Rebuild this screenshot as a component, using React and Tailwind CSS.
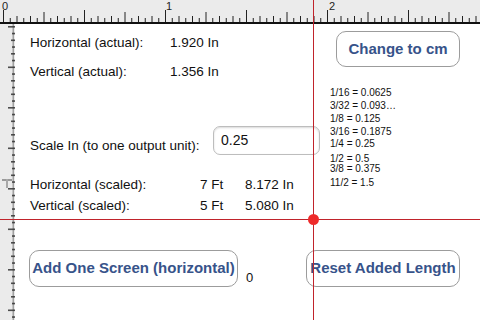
import React from "react";

const STEP = 6.75;

function TopRuler() {
  const ticks = [];
  for (let i = 0; i < 72; i++) {
    const x = 3.5 + i * STEP;
    let h = i % 2 === 0 ? 6 : 4;
    if (i % 6 === 0) h = 10;
    if (i % 12 === 0) h = 12;
    if (i % 24 === 0) h = 12;
    ticks.push(<line key={i} x1={x} x2={x} y1={22 - h} y2={22} stroke="#222" strokeWidth="1" />);
  }
  return (
    <div className="h-[24px] w-full bg-[#ebebeb]">
      <svg width="480" height="24" className="block">
        {ticks}
        <rect x="0" y="22" width="480" height="2" fill="#111" />
        <text x="2" y="10" fontSize="11" fill="#222" fontFamily="Liberation Sans, sans-serif">0</text>
        <text x="166" y="10" fontSize="11" fill="#222" fontFamily="Liberation Sans, sans-serif">1</text>
        <text x="329" y="10" fontSize="11" fill="#222" fontFamily="Liberation Sans, sans-serif">2</text>
      </svg>
    </div>
  );
}

function SideRuler() {
  const ticks = [];
  for (let i = 0; i < 45; i++) {
    const y = 2 + i * STEP;
    let w = i % 2 === 0 ? 4 : 3;
    if (i % 6 === 0) w = 7;
    ticks.push(<rect key={i} x={15 - w} y={y} width={w} height="1.6" fill="#333" opacity="0.85" />);
  }
  return (
    <div className="w-[15px] h-full bg-[#ebebeb] shrink-0">
      <svg width="15" height="296" className="block">
        <rect x="12.5" y="0" width="1.5" height="296" fill="#555" opacity="0.5" />
        {ticks}
        <rect x="2" y="155" width="10" height="2" fill="#9a9a9a" />
        <rect x="6" y="155" width="2" height="9" fill="#a8a8a8" />
      </svg>
    </div>
  );
}

function Row({ label, labelW, children, className }) {
  return (
    <div className={"flex text-[13.5px] leading-[16px] " + (className || "")}>
      <span className={"shrink-0 " + labelW}>{label}</span>
      {children}
    </div>
  );
}

const fractions = [
  ["1/16 = 0.0625", ""],
  ["3/32 = 0.093\u2026", ""],
  ["1/8 = 0.125", ""],
  ["3/16 = 0.1875", ""],
  ["1/4 = 0.25", "-mt-[1px]"],
  ["1/2 = 0.5", "mt-[2px]"],
  ["3/8 = 0.375", "-mt-[3px]"],
  ["11/2 = 1.5", "mt-[1px]"],
];

export default function App() {
  return (
    <div className="relative w-[480px] h-[320px] overflow-hidden bg-white text-[#111] font-['Liberation_Sans',Arial,sans-serif]">
      <TopRuler />

      <div className="flex h-[296px]">
        <SideRuler />

        <div className="flex-1 flex flex-col">
          {/* top part */}
          <div className="flex h-[190px]">
            <div className="w-[298px] shrink-0 pl-[15px] pt-[11px]">
              <Row label="Horizontal (actual):" labelW="w-[140px]">
                <span>1.920 In</span>
              </Row>
              <Row label="Vertical (actual):" labelW="w-[140px]" className="mt-[13px]">
                <span>1.356 In</span>
              </Row>

              <div className="flex items-end mt-[46px]">
                <span className="w-[183px] shrink-0 text-[13.5px] leading-[16px] mb-[1px]">
                  Scale In (to one output unit):
                </span>
                <div className="w-[107px] shrink-0 h-[29px] rounded-[7px] border border-[#bdbdbd] shadow-[inset_0_1px_2px_rgba(0,0,0,0.15)] pl-[7px] flex items-center text-[14px]">
                  0.25
                </div>
              </div>

              <Row label="Horizontal (scaled):" labelW="w-[170px]" className="mt-[22px]">
                <span className="w-[45px]">7 Ft</span>
                <span>8.172 In</span>
              </Row>
              <Row label="Vertical (scaled):" labelW="w-[170px]" className="mt-[5px]">
                <span className="w-[45px]">5 Ft</span>
                <span>5.080 In</span>
              </Row>
            </div>

            <div className="flex-1 flex flex-col">
              <button className="ml-[23px] mt-[7px] w-[124px] h-[36px] rounded-[10px] border border-[#9c9c9c] bg-white text-[15px] font-bold text-[#37538a]">
                Change to cm
              </button>
              <div className="ml-[17px] mt-[19px] text-[10px] leading-[13px] text-[#111]">
                {fractions.map(([t, c]) => (
                  <div key={t} className={c}>{t}</div>
                ))}
              </div>
            </div>
          </div>

          {/* bottom buttons */}
          <div className="flex items-start mt-[36px] pl-[14px] pr-[20px]">
            <button className="w-[209px] h-[37px] rounded-[10px] border border-[#9c9c9c] bg-white text-[15px] font-bold text-[#37538a] whitespace-nowrap">
              Add One Screen (horizontal)
            </button>
            <span className="ml-[8px] mt-[20px] text-[13px] leading-[16px]">0</span>
            <button className="ml-auto w-[154px] h-[37px] rounded-[10px] border border-[#9c9c9c] bg-white text-[15px] font-bold text-[#37538a] whitespace-nowrap">
              Reset Added Length
            </button>
          </div>
        </div>
      </div>

      {/* crosshair */}
      <div className="absolute left-[313px] top-0 w-px h-full bg-[#c0232b]" />
      <div className="absolute top-[219px] left-0 h-px w-full bg-[#c0232b]" />
      <div className="absolute left-[308px] top-[214px] w-[11px] h-[11px] rounded-full bg-[#ee2a2a]" />
    </div>
  );
}
